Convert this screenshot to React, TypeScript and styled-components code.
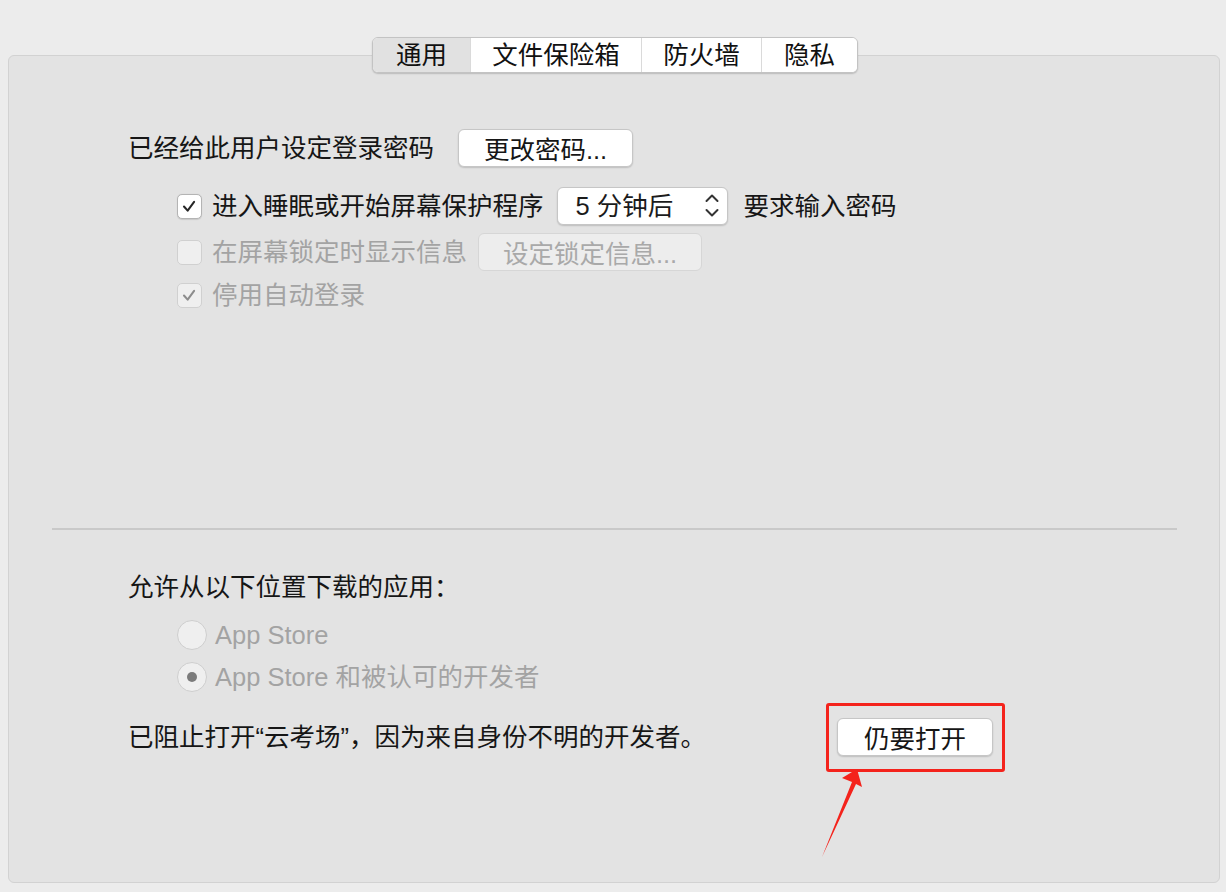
import React from "react";
import styled, { createGlobalStyle } from "styled-components";

const Global = createGlobalStyle`
  html, body { margin: 0; padding: 0; background: #ececec; }
  body {
    font-family: "Liberation Sans", "Noto Sans CJK SC", sans-serif;
    font-size: 25.5px;
    color: #1b1b1b;
    -webkit-font-smoothing: antialiased;
  }
  * { box-sizing: border-box; }
`;

const Window = styled.div`
  width: 1226px;
  height: 892px;
  padding: 37px 6px 9px 8px;
  display: flex;
  flex-direction: column;
`;

const TabBar = styled.div`
  align-self: center;
  display: flex;
  height: 36px;
  margin-left: 2px;
  border: 1px solid #c3c3c3;
  border-radius: 6px;
  background: #fff;
  box-shadow: 0 1px 1.5px rgba(0, 0, 0, 0.18);
  overflow: hidden;
  position: relative;
  z-index: 1;
`;

const Tab = styled.div<{ $w: number; $active?: boolean }>`
  width: ${(p) => p.$w}px;
  display: flex;
  align-items: center;
  justify-content: center;
  line-height: 34px;
  background: ${(p) => (p.$active ? "#e1e1e1" : "#ffffff")};
  color: #111;
  & + & { border-left: 1.5px solid #dadada; }
`;

const Panel = styled.div`
  margin-top: -18px;
  height: 828px;
  background: #e3e3e3;
  border: 1px solid #d2d2d2;
  border-radius: 6px;
  display: flex;
  flex-direction: column;
`;

const TopSection = styled.div`
  height: 472px;
  flex: none;
  padding: 73px 0 0 119px;
  display: flex;
  flex-direction: column;
`;

const Separator = styled.div`
  height: 2px;
  flex: none;
  margin: 0 42px 0 43px;
  background: #c9c9c9;
`;

const BottomSection = styled.div`
  padding: 38px 0 0 119px;
  display: flex;
  flex-direction: column;
`;

const Row = styled.div<{ $indent?: number; $mt?: number; $h?: number }>`
  display: flex;
  align-items: center;
  height: ${(p) => p.$h ?? 38}px;
  margin-top: ${(p) => p.$mt ?? 0}px;
  padding-left: ${(p) => p.$indent ?? 0}px;
  white-space: nowrap;
`;

const Label = styled.span<{ $disabled?: boolean; $gap?: number }>`
  color: ${(p) => (p.$disabled ? "#a3a3a3" : "#161616")};
  margin-right: ${(p) => p.$gap ?? 0}px;
  line-height: 38px;
`;

const Message = styled.span`
  width: 709px;
  color: #161616;
  line-height: 38px;
`;

const PushButton = styled.button<{ $w: number; $disabled?: boolean }>`
  width: ${(p) => p.$w}px;
  height: 38px;
  padding: 0 0 2px;
  font: inherit;
  color: ${(p) => (p.$disabled ? "#a9a9a9" : "#161616")};
  background: ${(p) => (p.$disabled ? "#ededed" : "#ffffff")};
  border: 1px solid ${(p) => (p.$disabled ? "#d6d6d6" : "#c6c6c6")};
  border-radius: 6px;
  box-shadow: ${(p) => (p.$disabled ? "none" : "0 1px 1.5px rgba(0,0,0,0.16)")};
  display: flex;
  align-items: center;
  justify-content: center;
`;

const Popup = styled.div`
  width: 171px;
  height: 38px;
  margin: 0 16px 0 1px;
  padding: 0 8px 0 18px;
  background: #fff;
  border: 1px solid #c6c6c6;
  border-radius: 6px;
  box-shadow: 0 1px 1.5px rgba(0, 0, 0, 0.16);
  display: flex;
  align-items: center;
  justify-content: space-between;
  line-height: 36px;
`;

const Box = styled.span<{ $disabled?: boolean }>`
  width: 25px;
  height: 25px;
  margin-right: 10px;
  flex: none;
  border-radius: 5px;
  background: ${(p) => (p.$disabled ? "#efefef" : "#ffffff")};
  border: 1px solid ${(p) => (p.$disabled ? "#d0d0d0" : "#b4b4b4")};
  box-shadow: ${(p) => (p.$disabled ? "none" : "0 0.5px 1px rgba(0,0,0,0.12)")};
  display: flex;
  align-items: center;
  justify-content: center;
`;

const Radio = styled.span`
  width: 30px;
  height: 30px;
  margin-right: 8px;
  flex: none;
  border-radius: 50%;
  background: #efefef;
  border: 1px solid #cecece;
  display: flex;
  align-items: center;
  justify-content: center;
`;

const RadioDot = styled.span`
  width: 10px;
  height: 10px;
  border-radius: 50%;
  background: #7b7b7b;
`;

const Anchor = styled.div`
  position: relative;
`;

const Highlight = styled.div`
  position: absolute;
  left: -11px;
  top: -15px;
  right: -12px;
  bottom: -16px;
  border: 3px solid #f4231c;
  border-radius: 3px;
  pointer-events: none;
`;

const Arrow = styled.svg`
  position: absolute;
  left: -22px;
  top: 43px;
  overflow: visible;
`;

const ButtonSlot = styled.div`
  margin-left: 11px;
`;

const Check: React.FC<{ disabled?: boolean; checked?: boolean }> = ({ disabled, checked }) => (
  <Box $disabled={disabled}>
    {checked && (
      <svg width="25" height="25" viewBox="0 0 25 25">
        <path
          d="M6.5 12.5 L10.5 17 L17.5 7.5"
          fill="none"
          stroke={disabled ? "#8c8c8c" : "#262626"}
          strokeWidth="2.2"
          strokeLinecap="round"
          strokeLinejoin="round"
        />
      </svg>
    )}
  </Box>
);

const Chevrons = () => (
  <svg width="14" height="24" viewBox="0 0 14 24">
    <path d="M1.5 7 L7 1.5 L12.5 7" fill="none" stroke="#333" strokeWidth="2" strokeLinecap="round" strokeLinejoin="round" />
    <path d="M1.5 16 L7 21.5 L12.5 16" fill="none" stroke="#333" strokeWidth="2" strokeLinecap="round" strokeLinejoin="round" />
  </svg>
);

export default function App() {
  return (
    <>
      <Global />
      <Window>
        <TabBar>
          <Tab $w={97} $active>通用</Tab>
          <Tab $w={171}>文件保险箱</Tab>
          <Tab $w={120}>防火墙</Tab>
          <Tab $w={96}>隐私</Tab>
        </TabBar>
        <Panel>
          <TopSection>
            <Row>
              <Label $gap={24}>已经给此用户设定登录密码</Label>
              <PushButton $w={175}>更改密码...</PushButton>
            </Row>
            <Row $indent={49} $mt={20}>
              <Check checked />
              <Label $gap={12}>进入睡眠或开始屏幕保护程序</Label>
              <Popup>
                <span>5 分钟后</span>
                <Chevrons />
              </Popup>
              <Label>要求输入密码</Label>
            </Row>
            <Row $indent={49} $mt={8}>
              <Check disabled />
              <Label $disabled>在屏幕锁定时显示信息</Label>
              <ButtonSlot>
                <PushButton $w={224} $disabled>设定锁定信息...</PushButton>
              </ButtonSlot>
            </Row>
            <Row $indent={49} $mt={5}>
              <Check disabled checked />
              <Label $disabled>停用自动登录</Label>
            </Row>
          </TopSection>
          <Separator />
          <BottomSection>
            <Row>
              <Label>允许从以下位置下载的应用：</Label>
            </Row>
            <Row $indent={49} $mt={10}>
              <Radio />
              <Label $disabled>App Store</Label>
            </Row>
            <Row $indent={49} $mt={4}>
              <Radio>
                <RadioDot />
              </Radio>
              <Label $disabled>App Store 和被认可的开发者</Label>
            </Row>
            <Row $mt={22}>
              <Message>已阻止打开“云考场”，因为来自身份不明的开发者。</Message>
              <Anchor>
                <PushButton $w={156}>仍要打开</PushButton>
                <Highlight />
                <Arrow width="55" height="100" viewBox="0 0 55 100">
                  <polygon points="7,96 37,21 27,17 42,8 47,26 41,23" fill="#f4231c" />
                </Arrow>
              </Anchor>
            </Row>
          </BottomSection>
        </Panel>
      </Window>
    </>
  );
}
